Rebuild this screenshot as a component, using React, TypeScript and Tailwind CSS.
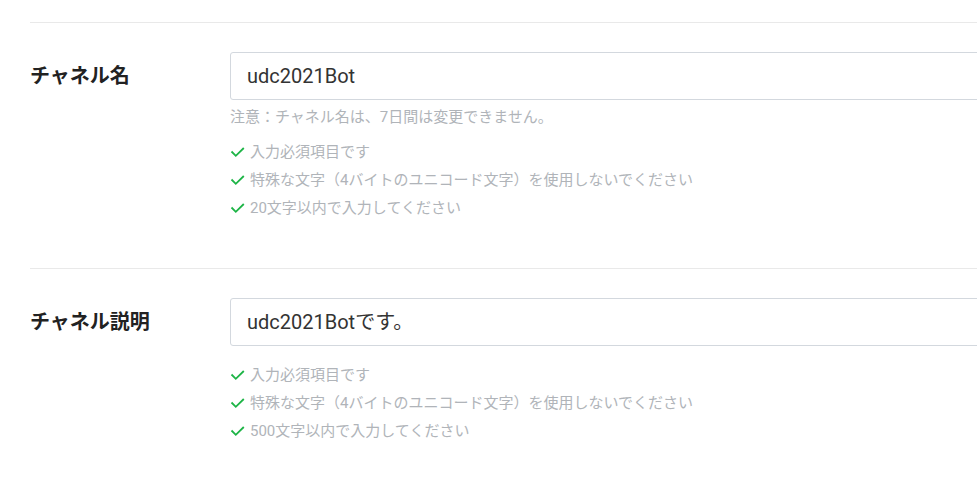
import { ReactNode } from "react";

const font = { fontFamily: "Roboto, 'Noto Sans CJK JP', sans-serif" };

function Check() {
    return (
        <svg width="15" height="14" viewBox="0 0 15 14" className="shrink-0">
            <polyline points="1.5,6.5 5.8,10.8 13.8,3" fill="none" stroke="#1db446" strokeWidth="1.8" />
        </svg>
    );
}

function Rule({ children }: { children: ReactNode }) {
    return (
        <li className="flex items-center gap-[5px] h-[28px] text-[15px] text-[#b0b4b9]">
            <Check />
            <span>{children}</span>
        </li>
    );
}

function Field({ label, value, note, rules, last }: { label: string; value: string; note?: string; rules: string[]; last?: boolean }) {
    return (
        <section className={`flex border-t border-[#e9e9e9] pt-[29px] ${last ? "pb-[40px]" : "pb-[46px]"}`}>
            <div className="w-[200px] shrink-0 h-[48px] flex items-center text-[20px] font-bold text-[#222]">{label}</div>
            <div className="flex-1 min-w-0">
                <div className="w-[800px] h-[48px] border border-[#d3d8de] rounded-[3px] flex items-center px-[16px] text-[20px] text-[#333]">
                    {value}
                </div>
                {note && <p className="mt-[7px] h-[20px] leading-[20px] text-[15px] text-[#b0b4b9]">{note}</p>}
                <ul className={note ? "mt-[11px]" : "mt-[15px]"}>
                    {rules.map((r, i) => (
                        <Rule key={i}>{r}</Rule>
                    ))}
                </ul>
            </div>
        </section>
    );
}

export default function App() {
    return (
        <div className="min-h-screen bg-white overflow-hidden pl-[30px] pt-[22px]" style={font}>
            <Field
                label="チャネル名"
                value="udc2021Bot"
                note="注意：チャネル名は、7日間は変更できません。"
                rules={["入力必須項目です", "特殊な文字（4バイトのユニコード文字）を使用しないでください", "20文字以内で入力してください"]}
            />
            <Field
                label="チャネル説明"
                value="udc2021Botです。"
                rules={["入力必須項目です", "特殊な文字（4バイトのユニコード文字）を使用しないでください", "500文字以内で入力してください"]}
                last
            />
        </div>
    );
}
